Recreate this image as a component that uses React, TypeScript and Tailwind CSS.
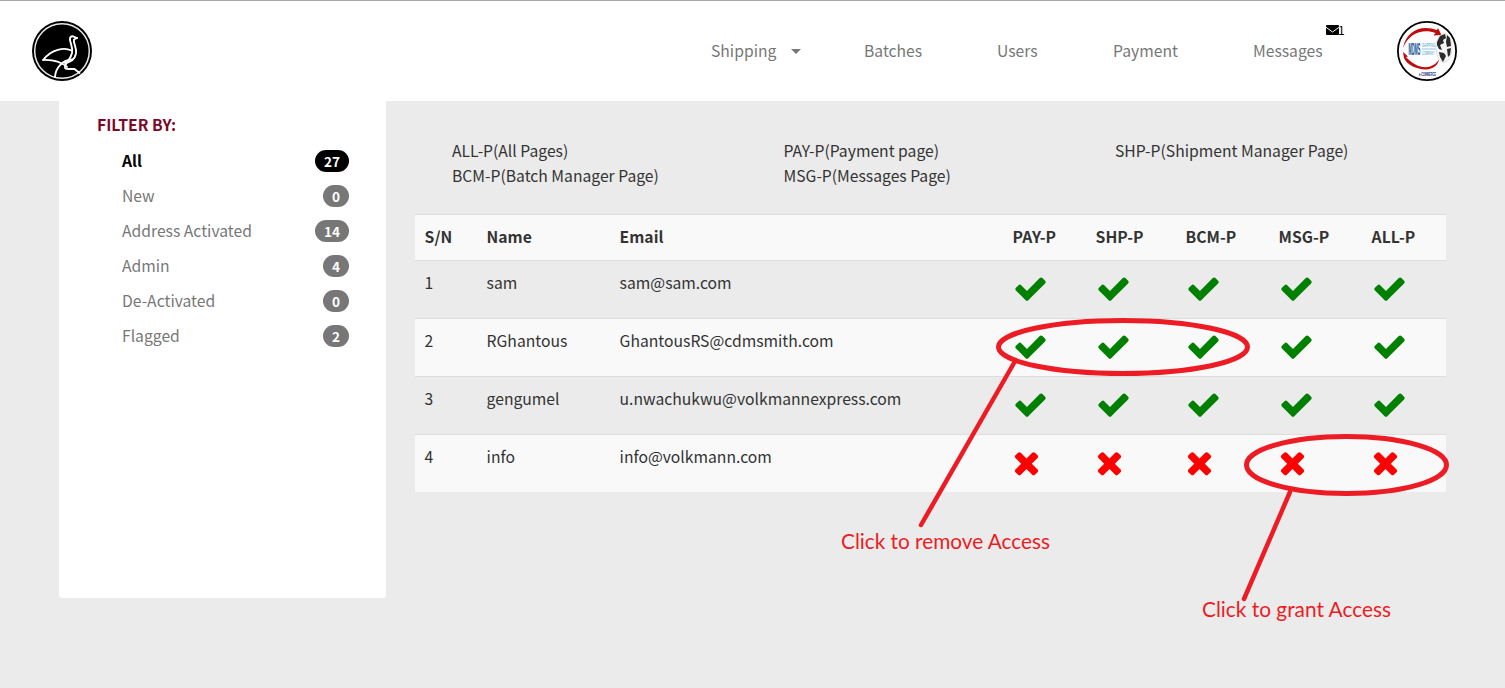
import React from "react";

const CHECK =
  "M1671 566q0 40-28 68l-724 724-136 136q-28 28-68 28t-68-28l-136-136-362-362q-28-28-28-68t28-68l136-136q28-28 68-28t68 28l294 295 656-657q28-28 68-28t68 28l136 136q28 28 28 68z";
const CROSS =
  "M1490 1322q0 40-28 68l-136 136q-28 28-68 28t-68-28l-294-294-294 294q-28 28-68 28t-68-28l-136-136q-28-28-28-68t28-68l294-294-294-294q-28-28-28-68t28-68l136-136q28-28 68-28t68 28l294 294 294-294q28-28 68-28t68 28l136 136q28 28 28 68t-28 68l-294 294 294 294q28 28 28 68z";

const filters = [
  { label: "All", count: 27, active: true },
  { label: "New", count: 0 },
  { label: "Address Activated", count: 14 },
  { label: "Admin", count: 4 },
  { label: "De-Activated", count: 0 },
  { label: "Flagged", count: 2 },
];

const users = [
  { name: "sam", email: "sam@sam.com", access: true },
  { name: "RGhantous", email: "GhantousRS@cdmsmith.com", access: true },
  { name: "gengumel", email: "u.nwachukwu@volkmannexpress.com", access: true },
  { name: "info", email: "info@volkmann.com", access: false },
];

const permissions = ["PAY-P", "SHP-P", "BCM-P", "MSG-P", "ALL-P"];

function OstrichLogo() {
  return (
    <svg viewBox="0 0 60 60" className="size-[60px] shrink-0" fill="none">
      <circle cx="30" cy="30" r="30" fill="#000" />
      <circle cx="30" cy="30" r="27.300" stroke="#e8e8e8" strokeWidth="1.500" />
      <g stroke="#fff" strokeWidth="1.900" strokeLinejoin="round" strokeLinecap="round">
        <path d="M45 17 41 15.300q-3.500-.3-3 3.700c.5 4 3 7 2 13-1 5-3.500 7-6 11-2 4-1.500 5 2 5h6.500l5 4" />
        <path d="M45 17 42 18.500c-1 3.500 3 8 2 14-1 5-5 8.500-11 9.500" />
        <path d="M39.500 29.500c-7-3.500-20-1.500-28.500 9.500 9-.5 17 1 24 7" />
        <path d="M40 38.500c-9 .5-16.500 8-17 17.500" />
      </g>
    </svg>
  );
}

function CompanyLogo() {
  return (
    <svg viewBox="0 0 60 60" className="size-[60px] shrink-0" fill="none">
      <circle cx="30" cy="30" r="29.100" fill="#fff" stroke="#000" strokeWidth="1.800" />
      <path d="M6 27C9 10 24 3 40 9l1-2 3.500 7-8 .5 2-2.500C26 7.500 12 12 6 27Z" fill="#c00c0c" />
      <path d="M6 31l5 4.500-2 .5c7 8 17 12 24 9.500 5-2 7-4 9-7-1 6-6 9.500-13 10C19 48 10 44 7 37Z" fill="#c00c0c" />
      <ellipse cx="47" cy="27" rx="8" ry="14.500" fill="#f6f6f6" stroke="#ccc" strokeWidth=".6" />
      <path d="M40 21l3-6 5-2 1 4-3 2 1 3-4 2 2 5-3-1-2-4ZM42 31l5 1 2 3-3 6-3-5ZM50 14l3 3 1 8-4 1-1-5ZM50 28l4-1-1 7-2 2Z" fill="#2b2b2b" />
      <text transform="translate(11.500 33.500) scale(.245 1)" fontFamily="Liberation Sans" fontSize="16" fontWeight="700" fill="#0b4a8f">MDMS</text>
      <g fontFamily="Liberation Sans" fontSize="5" fill="#3f9ac9">
        <text transform="translate(25 26) scale(.56 1)">SHIPPING</text>
        <text transform="translate(25 33.500) scale(.5 1)">COMPANY</text>
      </g>
      <path d="M25 28H38.500" stroke="#3f9ac9" strokeWidth=".6" />
      <text transform="translate(22 54.500) scale(.5 1)" fontFamily="Liberation Sans" fontSize="5" fontWeight="700" fill="#182e78">e-COMMERCE</text>
    </svg>
  );
}

function Header() {
  return (
    <header className="flex h-[101px] items-start border-t border-[#aaa] bg-white pl-8 pr-12 pt-5 text-[#777]">
      <OstrichLogo />
      <nav className="ml-auto flex h-[58px] items-center">
        <a className="flex w-[153px] items-center">
          <span className="w-[80px]">Shipping</span>
          <span className="mt-0.5 border-x-[5px] border-t-[5px] border-x-transparent border-t-[#777]" />
        </a>
        <a className="w-[133px]">Batches</a>
        <a className="w-[116px]">Users</a>
        <a className="w-[140px]">Payment</a>
        <a className="relative w-[144px]">
          Messages
          <span className="absolute -top-[14px] left-[73px] flex items-center text-[12px] leading-[15px] text-black">
            <svg viewBox="0 0 13 10" className="h-[10px] w-[13px]">
              <rect width="13" height="10" rx="1" fill="#000" />
              <path d="M0 2.300 6.500 7 13 2.300" fill="none" stroke="#fff" strokeWidth="1" />
            </svg>
            <span className="-ml-px -mt-0.5">1</span>
          </span>
        </a>
      </nav>
      <CompanyLogo />
    </header>
  );
}

function Sidebar() {
  return (
    <aside className="h-[497px] w-[327px] shrink-0 rounded-b bg-white pl-[38px] pr-[37px] pt-[11px]">
      <h2 className="font-bold text-[#7b0828]">FILTER BY:</h2>
      <ul className="pl-[25px] pt-[6px]">
        {filters.map((f) => (
          <li key={f.label} className={`flex h-[35px] items-center justify-between ${f.active ? "font-bold text-black" : "text-[#777]"}`}>
            <span>{f.label}</span>
            <span className={`flex h-[22px] items-center rounded-full px-[9px] pt-px text-[13.6px] font-bold text-white ${f.active ? "bg-black" : "bg-[#777]"}`}>
              {f.count}
            </span>
          </li>
        ))}
      </ul>
    </aside>
  );
}

function AccessTable() {
  return (
    <table className="mt-[26px] w-[1031px] table-fixed border-collapse text-left">
      <colgroup>
        <col className="w-[62px]" />
        <col className="w-[133px]" />
        <col className="w-[393px]" />
        <col className="w-[83px]" />
        <col className="w-[90px]" />
        <col className="w-[93px]" />
        <col className="w-[93px]" />
        <col className="w-[84px]" />
      </colgroup>
      <thead>
        <tr className="h-[46px] border-t border-[#ddd] bg-[#f9f9f9]">
          {["S/N", "Name", "Email", ...permissions].map((h) => (
            <th key={h} className="px-[9.6px] pb-[3px] font-bold">{h}</th>
          ))}
        </tr>
      </thead>
      <tbody>
        {users.map((u, i) => (
          <tr key={u.name} className="h-[58px] border-t border-[#ddd] align-top last:h-[57px] even:bg-[#f9f9f9]">
            <td className="px-[9.6px] pt-[9px]">{i + 1}</td>
            <td className="px-[9.6px] pt-[9px]">{u.name}</td>
            <td className="px-[9.6px] pt-[9px]">{u.email}</td>
            {permissions.map((p) => (
              <td key={p} className="pl-[9.6px] pt-[10px]">
                <svg viewBox="0 0 1792 1792" className={`size-[35px] ${u.access ? "fill-[#008000]" : "-ml-[4px] fill-[#f00]"}`}>
                  <path d={u.access ? CHECK : CROSS} />
                </svg>
              </td>
            ))}
          </tr>
        ))}
      </tbody>
    </table>
  );
}

function Annotations() {
  return (
    <svg viewBox="0 0 1505 688" className="pointer-events-none absolute inset-0 h-[688px] w-[1505px]" fill="none">
      <g stroke="#ed1c24" strokeWidth="5" strokeLinecap="round">
        <ellipse cx="1123" cy="347" rx="124.500" ry="26.500" />
        <ellipse cx="1346.500" cy="465" rx="100" ry="28.500" />
        <path d="M1014 363 921 525M1290 492 1244 599" strokeWidth="4.500" />
      </g>
      <g fill="#ed1c24" fontFamily="Lato" fontSize="22">
        <text x="841" y="549" textLength="209" lengthAdjust="spacingAndGlyphs">Click to remove Access</text>
        <text x="1202" y="617" textLength="189" lengthAdjust="spacingAndGlyphs">Click to grant Access</text>
      </g>
    </svg>
  );
}

export default function App() {
  return (
    <div className="relative h-[688px] w-[1505px] overflow-hidden bg-[#ebebeb] font-['Noto_Sans_CJK_SC',sans-serif] text-[15.7px] leading-[25px] text-[#333]">
      <Header />
      <div className="flex pl-[59px]">
        <Sidebar />
        <main className="ml-[29px] w-[1031px] pt-[37px]">
          <div className="grid grid-cols-[331.5px_331.5px_1fr] pl-[37px]">
            <span>ALL-P(All Pages)</span>
            <span>PAY-P(Payment page)</span>
            <span>SHP-P(Shipment Manager Page)</span>
            <span>BCM-P(Batch Manager Page)</span>
            <span>MSG-P(Messages Page)</span>
          </div>
          <AccessTable />
        </main>
      </div>
      <Annotations />
    </div>
  );
}
